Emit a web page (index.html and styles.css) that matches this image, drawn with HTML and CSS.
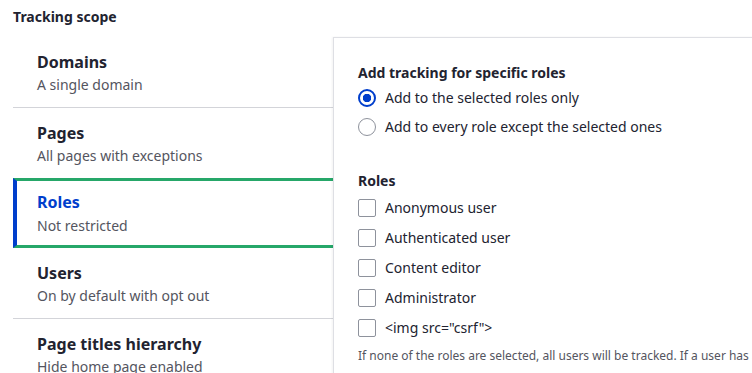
FILE: index.html
```html
<!DOCTYPE html>
<html lang="en">
<head>
  <meta charset="UTF-8">
  <title>Tracking scope</title>
  <link rel="stylesheet" href="styles.css">
</head>
<body>
  <div class="scope">
    <h2 class="scope-title">Tracking scope</h2>
    <div class="tabs">
      <ul class="tabs-menu">
        <li class="tab-item">
          <span class="tab-name">Domains</span>
          <span class="tab-summary">A single domain</span>
        </li>
        <li class="tab-item">
          <span class="tab-name">Pages</span>
          <span class="tab-summary">All pages with exceptions</span>
        </li>
        <li class="tab-item selected">
          <span class="tab-name">Roles</span>
          <span class="tab-summary">Not restricted</span>
        </li>
        <li class="tab-item">
          <span class="tab-name">Users</span>
          <span class="tab-summary">On by default with opt out</span>
        </li>
        <li class="tab-item">
          <span class="tab-name">Page titles hierarchy</span>
          <span class="tab-summary">Hide home page enabled</span>
        </li>
      </ul>
      <div class="tab-pane">
        <div class="field-title">Add tracking for specific roles</div>
        <label class="option"><span class="radio checked"></span>Add to the selected roles only</label>
        <label class="option"><span class="radio"></span>Add to every role except the selected ones</label>

        <div class="field-title roles-title">Roles</div>
        <label class="option check"><span class="box"></span>Anonymous user</label>
        <label class="option check"><span class="box"></span>Authenticated user</label>
        <label class="option check"><span class="box"></span>Content editor</label>
        <label class="option check"><span class="box"></span>Administrator</label>
        <label class="option check"><span class="box"></span>&lt;img src="csrf"&gt;</label>
        <div class="field-help">If none of the roles are selected, all users will be tracked. If a user has any of the roles checked, that user will be tracked (or excluded).</div>
      </div>
    </div>
  </div>
</body>
</html>
```

FILE: styles.css
```css
body {
  margin: 0;
  background: #fff;
  font-family: 'Noto Sans', 'Open Sans', sans-serif;
  color: #222330;
  overflow: hidden;
}

.scope {
  padding: 8px 0 0 13px;
}

.scope-title {
  margin: 0;
  font-size: 14px;
  line-height: 18px;
  font-weight: bold;
  height: 29px;
}

.tabs {
  display: flex;
}

.tabs-menu {
  list-style: none;
  margin: 0;
  padding: 0;
  width: 320px;
  flex: 0 0 320px;
}

.tab-item {
  display: flex;
  flex-direction: column;
  padding: 15px 0 12px 24px;
  border-bottom: 1px solid #d3d4d9;
  height: 43px;
}

.tab-name {
  font-size: 16px;
  line-height: 20px;
  font-weight: bold;
}

.tab-summary {
  margin-top: 3px;
  font-size: 14px;
  line-height: 20px;
  color: #545560;
}

.tab-item.selected {
  border-left: 4px solid #003ecc;
  border-top: 3px solid #26a769;
  border-bottom: 3px solid #26a769;
  margin-top: -1px;
  padding: 11px 0 9px 20px;
  height: 44px;
}

.tab-item.selected .tab-summary {
  margin-top: 4px;
}

.tab-item.selected .tab-name {
  color: #003ecc;
}

.tab-pane {
  flex: 1;
  min-width: 440px;
  border-top: 1px solid #dedfe4;
  border-left: 1px solid #dedfe4;
  box-shadow: -1px 0 2px rgba(0, 0, 0, 0.05);
  padding: 25px 0 0 24px;
  height: 400px;
}

.field-title {
  font-size: 14px;
  line-height: 20px;
  font-weight: bold;
}

.roles-title {
  margin: 30px 0 2px;
}

.option {
  display: flex;
  align-items: center;
  font-size: 14px;
  line-height: 20px;
  height: 29px;
  white-space: nowrap;
}

.option.check {
  height: 30px;
}

.radio {
  width: 18px;
  height: 18px;
  box-sizing: border-box;
  border: 1px solid #8e929c;
  border-radius: 50%;
  margin-right: 9px;
  flex: 0 0 18px;
}

.radio.checked {
  border: 2px solid #003ecc;
  background: radial-gradient(circle, #003ecc 0 4px, #fff 4.5px);
}

.box {
  width: 18px;
  height: 18px;
  box-sizing: border-box;
  border: 1px solid #8e929c;
  border-radius: 2px;
  margin-right: 9px;
  flex: 0 0 18px;
}

.field-help {
  margin-top: 5px;
  font-size: 12px;
  line-height: 16px;
  color: #545560;
  white-space: nowrap;
}
```
